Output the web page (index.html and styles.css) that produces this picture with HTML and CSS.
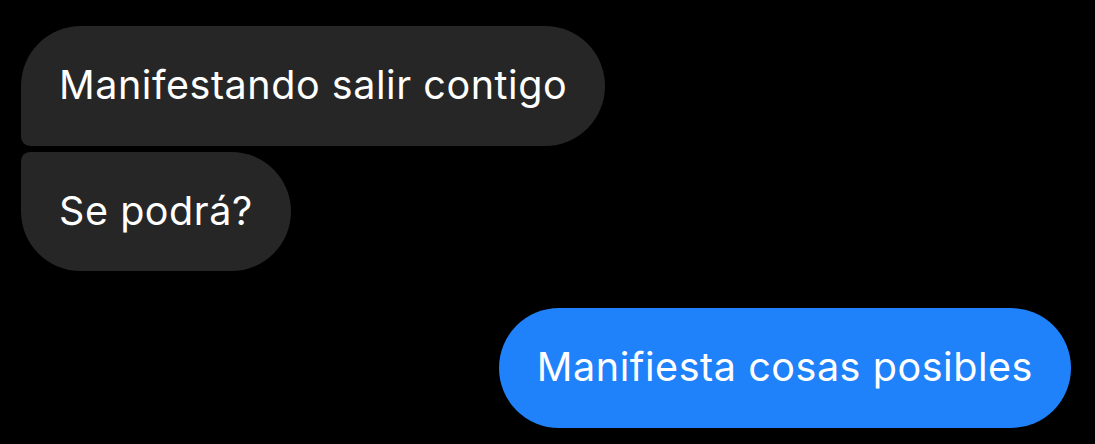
FILE: index.html
```html
<!DOCTYPE html>
<html lang="es">
<head>
<meta charset="utf-8">
<link rel="stylesheet" href="styles.css">
</head>
<body>
<div class="chat">
  <div class="group incoming">
    <div class="bubble in first">Manifestando salir contigo</div>
    <div class="bubble in last">Se podrá?</div>
  </div>
  <div class="group outgoing">
    <div class="bubble out">Manifiesta cosas posibles</div>
  </div>
</div>
</body>
</html>
```
FILE: styles.css
```css
html, body {
  margin: 0;
  padding: 0;
  background: #000;
  width: 1095px;
  height: 444px;
  overflow: hidden;
}
.chat {
  display: flex;
  flex-direction: column;
  padding: 26px 24px 0 21px;
  font-family: Inter, "Liberation Sans", sans-serif;
  color: #fff;
}
.group {
  display: flex;
  flex-direction: column;
  gap: 6px;
}
.incoming { align-items: flex-start; }
.outgoing { align-items: flex-end; margin-top: 37px; }
.bubble {
  height: 120px;
  box-sizing: border-box;
  display: flex;
  align-items: center;
  padding: 0 38px 2px;
  font-size: 39.5px;
  letter-spacing: 0.55px;
  border-radius: 60px;
  white-space: nowrap;
}
.in { background: #262626; }
.in.first { border-bottom-left-radius: 9px; height: 120px; }
.in.last { border-top-left-radius: 9px; height: 119px; }
.out { background: #1f82fb; }
```
